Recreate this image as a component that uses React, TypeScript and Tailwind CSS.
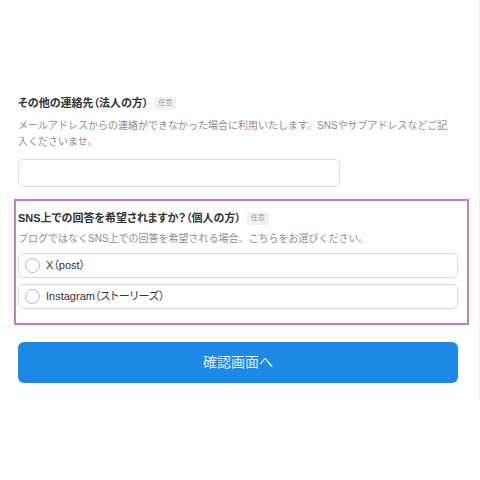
import React from "react";

const font = { fontFamily: '"Liberation Sans", "Noto Sans CJK JP", sans-serif' };

function Badge() {
  return (
    <span className="inline-flex items-center h-[13px] px-[4px] rounded-[3px] bg-[#f1f1f1] text-[7px] text-[#9a9a9a]">
      任意
    </span>
  );
}

function RadioOption({ label }: { label: string }) {
  return (
    <label className="flex items-center gap-[6px] h-[25px] w-[440px] pl-[6px] border border-[#dcdcdc] rounded-[5px] bg-white">
      <span className="w-[15px] h-[15px] rounded-full border-[1.5px] border-[#b8b8b8] bg-white" />
      <span className="text-[11px] text-[#333] [font-feature-settings:'palt']">{label}</span>
    </label>
  );
}

export default function App() {
  return (
    <div className="w-[480px] h-[480px] bg-white" style={font}>
      <div className="h-[400px] border-r border-[#f0f0f0] px-[18px] pt-[95px]">
        {/* その他の連絡先 */}
        <div className="flex items-center gap-[6px] h-[16px]">
          <h2 className="text-[11px] font-bold text-[#333] [font-feature-settings:'palt']">その他の連絡先（法人の方）</h2>
          <Badge />
        </div>
        <p className="mt-[7px] w-[440px] text-[10px] leading-[16px] text-[#8e8e8e]">
          メールアドレスからの連絡ができなかった場合に利用いたします。SNSやサブアドレスなどご記
          <br />
          入くださいませ。
        </p>
        <input className="mt-[9px] block h-[28px] w-[322px] border border-[#dcdcdc] rounded-[5px] bg-white" />

        {/* SNS回答 */}
        <div className="mt-[12px] -ml-[4px] w-[455px] border-2 border-[#c47bbf] pl-[2px] pt-[9px] pb-[14px]">
          <div className="flex items-center gap-[6px] h-[16px]">
            <h2 className="text-[11px] font-bold text-[#333] [font-feature-settings:'palt']">SNS上での回答を希望されますか？（個人の方）</h2>
            <Badge />
          </div>
          <p className="mt-[5px] text-[10px] leading-[16px] text-[#8e8e8e]">
            ブログではなくSNS上での回答を希望される場合、こちらをお選びください。
          </p>
          <div className="mt-[6px] flex flex-col gap-[6px]">
            <RadioOption label="X（post）" />
            <RadioOption label="Instagram（ストーリーズ）" />
          </div>
        </div>

        <button className="mt-[17px] h-[41px] w-[440px] rounded-[6px] bg-[#1e88e5] text-[14px] text-white/85">
          確認画面へ
        </button>
      </div>
    </div>
  );
}
